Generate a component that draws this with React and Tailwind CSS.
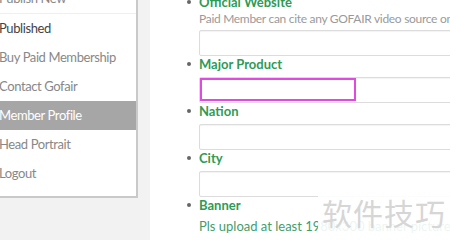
const menu = [
  { label: 'Publish New', tone: 'text-[#888]', divider: true },
  { label: 'Published', tone: 'text-[#444]' },
  { label: 'Buy Paid Membership', tone: 'text-[#888]' },
  { label: 'Contact Gofair', tone: 'text-[#888]' },
  { label: 'Member Profile', active: true },
  { label: 'Head Portrait', tone: 'text-[#888]' },
  { label: 'Logout', tone: 'text-[#888]' },
]

function Bullet() {
  return <span className="absolute left-[-12px] top-[6px] w-[4px] h-[4px] rounded-full bg-[#666]" />
}

function Field({ label, help, focused }) {
  return (
    <li className="relative">
      <Bullet />
      <div className="h-[16px] leading-[16px] text-[13px] font-bold text-[#2f9a55]">{label}</div>
      {help && (
        <div className="mt-[1px] h-[16px] leading-[16px] text-[12px] tracking-[-0.3px] text-[#9a9a9a] whitespace-nowrap">{help}</div>
      )}
      <div className={`relative ${help ? 'mt-[3px]' : 'mt-[5px]'} h-[26px] w-[300px] rounded-[2px] border border-[#dcdcdc] bg-white shadow-[inset_0_1px_1px_rgba(0,0,0,0.05)]`}>
        {focused && (
          <div className="absolute left-0 top-0 h-[23px] w-[156px] border-2 border-[#df4ae0]" />
        )}
      </div>
    </li>
  )
}

export default function App() {
  return (
    <div className="relative flex h-[240px] w-[450px] overflow-hidden bg-[#f2f2f2] font-['Lato','Open_Sans',sans-serif]">
      <aside className="-mt-[15px] -ml-[1px] self-start w-[139px] shrink-0 bg-white border-r-2 border-b-2 border-[#c9c9c9] pb-[8px]">
        {menu.map((m) => (
          <div
            key={m.label}
            className={`h-[29px] flex items-center text-[13px] tracking-[-0.4px] whitespace-nowrap ${
              m.active ? 'bg-[#a6a6a6] text-white' : m.tone
            } ${m.divider ? 'border-b border-[#efefef]' : ''}`}
          >
            {m.label}
          </div>
        ))}
      </aside>
      <main className="ml-[12px] min-w-0 flex-1 bg-white pl-[49px]">
        <ul className="-mt-[6px]">
          <Field label="Official Website" help="Paid Member can cite any GOFAIR video source on" />
          <Field label="Major Product" focused />
          <Field label="Nation" />
          <Field label="City" />
          <li className="relative">
            <Bullet />
            <div className="h-[16px] leading-[16px] text-[13px] font-bold text-[#2f9a55]">Banner</div>
            <div className="mt-[5px] h-[16px] leading-[16px] text-[13px] text-[#3f9d6e] whitespace-nowrap">
              Pls upload at least 1980x300 banner picture
            </div>
          </li>
        </ul>
      </main>
      <span className="absolute left-[318px] top-[190px] pl-[4px] pr-[6px] whitespace-nowrap bg-white/90 text-[30px] leading-[44px] tracking-[1px] text-[#d6d6d6] font-['Noto_Sans_CJK_SC',sans-serif]">
        软件技巧
      </span>
    </div>
  )
}
